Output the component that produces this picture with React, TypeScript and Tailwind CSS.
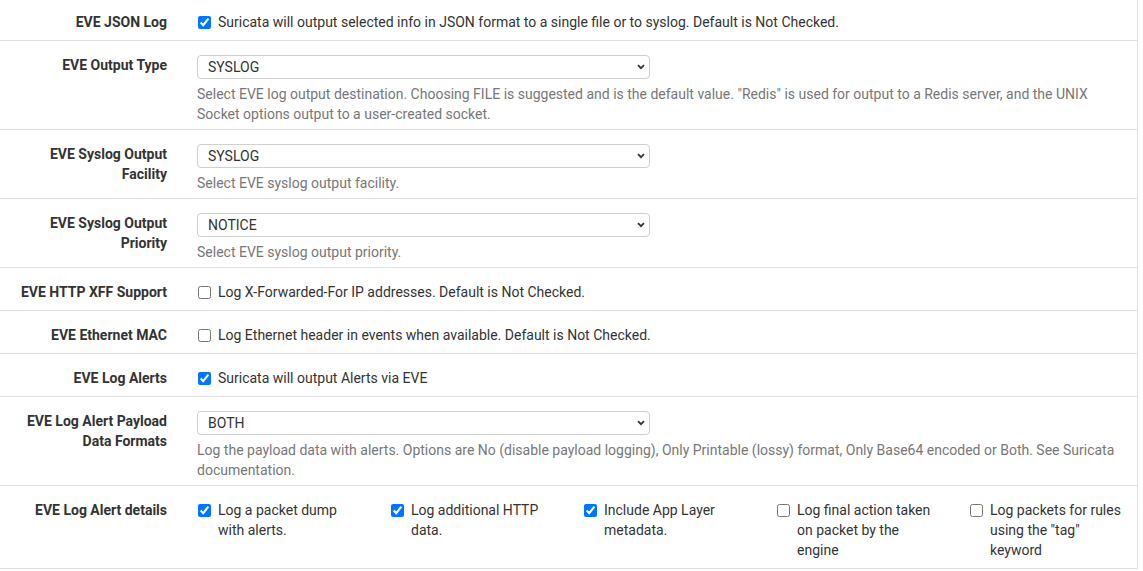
import { ReactNode } from "react";

const font = { fontFamily: "Roboto, 'Liberation Sans', sans-serif" };

const Row = ({ label, children, tight }: { label: string; children: ReactNode; tight?: boolean }) => (
  <div className={`flex border-b border-[#e0e0e0] pt-[14px] ${tight ? "pb-[5px]" : "pb-[8px]"}`}>
    <div className="w-[182px] shrink-0 px-[15px] text-right text-[14px] font-bold leading-5 text-[#333]">
      {label}
    </div>
    <div className="flex-1 pl-[15px] pr-[15px]">{children}</div>
  </div>
);

const Check = ({ checked, children }: { checked?: boolean; children: ReactNode }) => (
  <label className="flex items-start text-[14px] leading-5 text-[#333]">
    <input
      type="checkbox"
      defaultChecked={checked}
      className="mt-[4px] ml-[1px] mr-[7px] h-[13px] w-[13px] shrink-0 accent-[#0075ff]"
    />
    <span>{children}</span>
  </label>
);

const Select = ({ value, help }: { value: string; help: ReactNode }) => (
  <div>
    <div className="relative w-[453px]">
      <select
        defaultValue={value}
        className="block h-[24px] w-full appearance-none rounded-[4px] border border-[#cfcfcf] bg-white pl-[10px] text-[14px] leading-5 text-[#333]"
      >
        <option>{value}</option>
      </select>
      <svg
        className="pointer-events-none absolute right-[5px] top-[9px]"
        width="8"
        height="6"
        viewBox="0 0 8 6"
      >
        <path d="M1 1.2 L4 4.2 L7 1.2" fill="none" stroke="#333" strokeWidth="1.8" />
      </svg>
    </div>
    <p className="mt-[5px] text-[14px] leading-5 text-[#777]">{help}</p>
  </div>
);

const details: [string, boolean][] = [
  ["Log a packet dump with alerts.", true],
  ["Log additional HTTP data.", true],
  ["Include App Layer metadata.", true],
  ["Log final action taken on packet by the engine", false],
  ["Log packets for rules using the \"tag\" keyword", false],
];

export default function App() {
  return (
    <div className="h-[571px] w-[1143px] overflow-hidden bg-white" style={font}>
      <div className="-mt-[2px] w-[1138px] border-r border-[#e0e0e0]">
        <Row label="EVE JSON Log">
          <Check checked>
            Suricata will output selected info in JSON format to a single file or to syslog. Default is Not Checked.
          </Check>
        </Row>
        <Row label="EVE Output Type" tight>
          <Select
            value="SYSLOG"
            help='Select EVE log output destination. Choosing FILE is suggested and is the default value. "Redis" is used for output to a Redis server, and the UNIX Socket options output to a user-created socket.'
          />
        </Row>
        <Row label="EVE Syslog Output Facility" tight>
          <Select value="SYSLOG" help="Select EVE syslog output facility." />
        </Row>
        <Row label="EVE Syslog Output Priority" tight>
          <Select value="NOTICE" help="Select EVE syslog output priority." />
        </Row>
        <Row label="EVE HTTP XFF Support">
          <Check>Log X-Forwarded-For IP addresses. Default is Not Checked.</Check>
        </Row>
        <Row label="EVE Ethernet MAC">
          <Check>Log Ethernet header in events when available. Default is Not Checked.</Check>
        </Row>
        <Row label="EVE Log Alerts">
          <Check checked>Suricata will output Alerts via EVE</Check>
        </Row>
        <Row label="EVE Log Alert Payload Data Formats" tight>
          <Select
            value="BOTH"
            help="Log the payload data with alerts. Options are No (disable payload logging), Only Printable (lossy) format, Only Base64 encoded or Both. See Suricata documentation."
          />
        </Row>
        <Row label="EVE Log Alert details">
          <div className="flex">
            {details.map(([text, on]) => (
              <div key={text} className="w-[193px] shrink-0 pr-[30px]">
                <Check checked={on}>{text}</Check>
              </div>
            ))}
          </div>
        </Row>
      </div>
    </div>
  );
}
